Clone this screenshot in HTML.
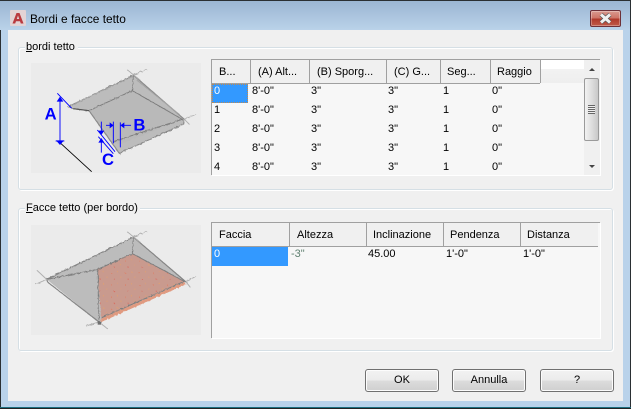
<!DOCTYPE html>
<html><head><meta charset="utf-8">
<style>
html,body{margin:0;padding:0;background:#1a1a1a}
#w{position:relative;width:631px;height:409px;overflow:hidden;font-family:"Liberation Sans",sans-serif;font-size:11px;color:#000;background:#b9d2ea}
#w div,#w span.t{position:absolute}
.t{line-height:14px;white-space:nowrap;height:14px}
.g{border:1px solid #d5dfe5;border-radius:3px;box-shadow:inset 1px 1px 0 #fff,1px 1px 0 #fff;box-sizing:border-box}
.im{background:#ebebeb}
.tb{background:#f7f7f7;border-left:1px solid #a0a0a0;border-top:1px solid #a0a0a0;box-sizing:border-box;box-shadow:1px 1px 0 #fff}
.sep{background:#a0a0a0;width:1px}
.btn{border:1px solid #707070;border-radius:3px;box-sizing:border-box;height:23px;background:linear-gradient(#f2f2f2 0,#ebebeb 48%,#dcdcdc 52%,#cfcfcf 100%);box-shadow:inset 0 0 0 1px #fcfcfc;text-align:center;line-height:21px}
</style></head><body>
<div id="w">
<div style="left:0;top:0;width:631px;height:30px;background:linear-gradient(#9ab5d2,#bad2e9)"></div>
<div style="left:0;top:0;width:631px;height:1px;background:#2a2f33"></div>
<div style="left:0;top:30px;width:1px;height:379px;background:#2a2f33"></div>
<div style="left:630px;top:0;width:1px;height:409px;background:#2a2f33"></div>
<div style="left:0;top:407px;width:631px;height:1px;background:#1d6f80"></div>
<div style="left:0;top:408px;width:631px;height:1px;background:#222"></div>
<div style="left:8px;top:30px;width:615px;height:371px;background:#f0f0f0"></div>

<svg style="position:absolute;left:10px;top:10px" width="16" height="16" viewBox="0 0 16 16"><rect width="16" height="16" rx="1" fill="#e3d3d5"/><path d="M2.5 13.5 L6.5 3 H9.5 L13.5 13.5 H10.8 L10 11.2 H6 L5.2 13.5 Z M6.8 9 H9.2 L8 5.5 Z" fill="#b93a3f" fill-rule="evenodd"/></svg>
<span class="t" style="left:30px;top:12px;font-size:11.9px;line-height:14px;color:#000">Bordi e facce tetto</span>

<div style="left:590px;top:10px;width:31px;height:17px;box-sizing:border-box;border:1px solid #6d3038;border-radius:2px;background:linear-gradient(#d99a90 0,#cf7668 45%,#b03a2c 55%,#c05a48 100%);box-shadow:inset 0 0 0 1px rgba(255,255,255,.3)"></div>
<svg style="position:absolute;left:598px;top:12px" width="15" height="13" viewBox="0 0 15 13"><path d="M3 2.5 L12 10.5 M12 2.5 L3 10.5" stroke="#555" stroke-width="4.4"/><path d="M3 2.5 L12 10.5 M12 2.5 L3 10.5" stroke="#f0f0f0" stroke-width="3"/></svg>

<div class="g" style="left:18px;top:47px;width:595px;height:143px"></div>
<div style="left:25px;top:40px;width:53px;height:14px;background:#f0f0f0"></div>
<span class="t" style="left:26px;top:40px"><u>b</u>ordi tetto</span>
<div class="im" style="left:31px;top:63px;width:170px;height:110px"></div>

<svg style="position:absolute;left:25px;top:60px" width="180" height="115" viewBox="0 0 540 345">
<defs><filter id="r" x="-5%" y="-5%" width="110%" height="110%"><feTurbulence type="fractalNoise" baseFrequency="0.12" numOctaves="2" seed="4" result="n"/><feDisplacementMap in="SourceGraphic" in2="n" scale="7"/></filter></defs>
<g filter="url(#r)">
<path d="M130 140 L325 45 L478 178 L476 192 L283 280 L192 152 L145 146 Z" fill="#bcbcbc"/>
<path d="M192 152 L322 92 L472 178 L280 255 Z" fill="#b9b9b9"/>
<path d="M130 140 L325 45 L478 178 L476 192 L283 280 L192 152 L145 146 Z" fill="none" stroke="#8a8a8a" stroke-width="3.5"/>
<path d="M192 152 L322 92 L325 45 M322 92 L472 178 M264 245 L472 178" fill="none" stroke="#7d7d7d" stroke-width="3"/>
<path d="M150 130 L322 50 M335 60 L465 165" stroke="#a4a4a4" stroke-width="3" fill="none"/>
<path d="M305 28 L345 60 M325 45 L365 28 M478 178 L512 163 M478 178 L495 195" stroke="#b0b0b0" stroke-width="3" fill="none"/>
</g>
<path d="M145 146 L192 152" stroke="#555" stroke-width="3.5" fill="none"/>
<path d="M107 250 L200 335" stroke="#000" stroke-width="2.6" fill="none"/>
<g stroke="#0000ff" stroke-width="2.8" fill="none">
<path d="M97 100 L140 145 M105 115 V245 M92 243 H118"/>
<path d="M217 210 L270 275 M220 230 L265 281"/>
<path d="M265 185 V250 M286 187 V262 M243 196 H258 M296 196 H318"/>
<path d="M229 185 V215 M229 245 V278"/>
</g>
<g fill="#0000ff">
<path d="M105 110 L95 125 H115 Z M105 255 L93 241 H117 Z"/>
<path d="M266 196 L254 187 V205 Z M286 196 L298 187 V205 Z"/>
<path d="M229 225 L220 212 H238 Z M229 234 L220 248 H238 Z"/>
<text x="59" y="179" font-family="Liberation Sans" font-weight="bold" font-size="50">A</text>
<text x="325" y="212" font-family="Liberation Sans" font-weight="bold" font-size="50">B</text>
<text x="231" y="315" font-family="Liberation Sans" font-weight="bold" font-size="50">C</text>
</g>
</svg>

<div class="tb" style="left:211px;top:59px;width:389px;height:116px"></div>
<div style="left:212px;top:60px;width:328px;height:23px;background:#f0f0f0"></div>
<div style="left:540px;top:60px;width:44px;height:9px;background:#fff"></div>
<div style="left:540px;top:69px;width:44px;height:14px;background:linear-gradient(#f2f2f2,#eee)"></div>
<div style="left:212px;top:83px;width:328px;height:1px;background:#a0a0a0"></div>
<div class="sep" style="left:250px;top:60px;height:23px"></div>
<div class="sep" style="left:309px;top:60px;height:23px"></div>
<div class="sep" style="left:386px;top:60px;height:23px"></div>
<div class="sep" style="left:440px;top:60px;height:23px"></div>
<div class="sep" style="left:490px;top:60px;height:23px"></div>
<div class="sep" style="left:540px;top:60px;height:23px"></div>
<span class="t" style="left:219px;top:65px">B...</span>
<span class="t" style="left:258px;top:65px">(A) Alt...</span>
<span class="t" style="left:317px;top:65px">(B) Sporg...</span>
<span class="t" style="left:394px;top:65px">(C) G...</span>
<span class="t" style="left:447px;top:65px">Seg...</span>
<span class="t" style="left:497px;top:65px">Raggio</span>

<div style="left:212px;top:84px;width:36px;height:19px;background:#3399ff;box-sizing:border-box;border:1px dotted #c08a50"></div>
<span class="t" style="left:214px;top:84px;color:#fff">0</span>
<span class="t" style="left:214px;top:103px">1</span>
<span class="t" style="left:214px;top:122px">2</span>
<span class="t" style="left:214px;top:141px">3</span>
<span class="t" style="left:214px;top:160px">4</span>
<span class="t" style="left:252px;top:84px">8'-0"</span><span class="t" style="left:311px;top:84px">3"</span><span class="t" style="left:388px;top:84px">3"</span><span class="t" style="left:443px;top:84px">1</span><span class="t" style="left:492px;top:84px">0"</span>
<span class="t" style="left:252px;top:103px">8'-0"</span><span class="t" style="left:311px;top:103px">3"</span><span class="t" style="left:388px;top:103px">3"</span><span class="t" style="left:443px;top:103px">1</span><span class="t" style="left:492px;top:103px">0"</span>
<span class="t" style="left:252px;top:122px">8'-0"</span><span class="t" style="left:311px;top:122px">3"</span><span class="t" style="left:388px;top:122px">3"</span><span class="t" style="left:443px;top:122px">1</span><span class="t" style="left:492px;top:122px">0"</span>
<span class="t" style="left:252px;top:141px">8'-0"</span><span class="t" style="left:311px;top:141px">3"</span><span class="t" style="left:388px;top:141px">3"</span><span class="t" style="left:443px;top:141px">1</span><span class="t" style="left:492px;top:141px">0"</span>
<span class="t" style="left:252px;top:160px">8'-0"</span><span class="t" style="left:311px;top:160px">3"</span><span class="t" style="left:388px;top:160px">3"</span><span class="t" style="left:443px;top:160px">1</span><span class="t" style="left:492px;top:160px">0"</span>

<div style="left:584px;top:60px;width:16px;height:115px;background:#f0f0f0"></div>
<div style="left:584px;top:78px;width:15px;height:63px;box-sizing:border-box;border:1px solid #9a9a9a;border-radius:2px;background:linear-gradient(90deg,#f2f2f2,#dcdcdc 55%,#c8c8c8)"></div>
<div style="left:588px;top:105px;width:7px;height:9px;background:repeating-linear-gradient(#666 0,#666 1px,#eee 1px,#eee 2px)"></div>
<svg style="position:absolute;left:584px;top:60px" width="16" height="115"><path d="M5 11 L8 8 L11 11 Z" fill="#444"/><path d="M5 105 L11 105 L8 108 Z" fill="#444"/></svg>

<div class="g" style="left:18px;top:208px;width:595px;height:143px"></div>
<div style="left:25px;top:201px;width:115px;height:14px;background:#f0f0f0"></div>
<span class="t" style="left:26px;top:201px"><u>F</u>acce tetto (per bordo)</span>
<div class="im" style="left:31px;top:225px;width:170px;height:110px"></div>

<svg style="position:absolute;left:25px;top:222px" width="180" height="115" viewBox="0 0 540 345">
<defs><pattern id="sp" width="42" height="36" patternUnits="userSpaceOnUse"><rect x="6" y="8" width="3" height="3" fill="#e07a60"/><rect x="24" y="4" width="3" height="3" fill="#dfa070"/><rect x="34" y="20" width="3" height="3" fill="#dfa070"/><rect x="14" y="26" width="3" height="3" fill="#d9695c"/></pattern></defs>
<g filter="url(#r)">
<path d="M65 172 L325 45 L483 180 L222 300 Z" fill="#bcbcbc"/>
<path d="M218 142 L322 95 L478 178 L228 288 Z" fill="#c99a8e"/>
<path d="M218 142 L322 95 L478 178 L228 288 Z" fill="url(#sp)"/>
<path d="M228 290 L478 180 L483 187 L225 302 Z" fill="#e09a80"/>
<path d="M65 172 L325 45 L483 180 M65 172 L70 182 L222 300" fill="none" stroke="#858585" stroke-width="3.5"/>
<path d="M65 172 L218 142 L322 95 L325 45 M218 142 L222 295 M322 95 L478 178 L228 288" fill="none" stroke="#7d7d7d" stroke-width="3"/>
<path d="M36 145 L65 172 L32 187 M305 28 L345 60 M325 45 L365 28 M483 180 L512 163 M483 180 L497 197 M222 300 L183 312 M222 300 L250 322" stroke="#b0b0b0" stroke-width="3" fill="none"/>
<rect x="218" y="298" width="10" height="10" fill="#707070"/>
</g>
</svg>

<div class="tb" style="left:211px;top:222px;width:389px;height:116px"></div>
<div style="left:212px;top:223px;width:386px;height:23px;background:#f0f0f0"></div>
<div style="left:212px;top:246px;width:386px;height:1px;background:#a0a0a0"></div>
<div class="sep" style="left:289px;top:223px;height:23px"></div>
<div class="sep" style="left:366px;top:223px;height:23px"></div>
<div class="sep" style="left:443px;top:223px;height:23px"></div>
<div class="sep" style="left:520px;top:223px;height:23px"></div>
<span class="t" style="left:219px;top:228px">Faccia</span>
<span class="t" style="left:297px;top:228px">Altezza</span>
<span class="t" style="left:373px;top:228px">Inclinazione</span>
<span class="t" style="left:450px;top:228px">Pendenza</span>
<span class="t" style="left:527px;top:228px">Distanza</span>
<div style="left:212px;top:247px;width:76px;height:19px;background:#3399ff"></div>
<span class="t" style="left:214px;top:247px;color:#fff">0</span>
<span class="t" style="left:291px;top:247px;color:#5f8070">-3"</span>
<span class="t" style="left:368px;top:247px">45.00</span>
<span class="t" style="left:446px;top:247px">1'-0"</span>
<span class="t" style="left:523px;top:247px">1'-0"</span>

<div class="btn" style="left:365px;top:369px;width:74px">OK</div>
<div class="btn" style="left:452px;top:369px;width:74px">Annulla</div>
<div class="btn" style="left:540px;top:369px;width:74px">?</div>
</div>
</body></html>
